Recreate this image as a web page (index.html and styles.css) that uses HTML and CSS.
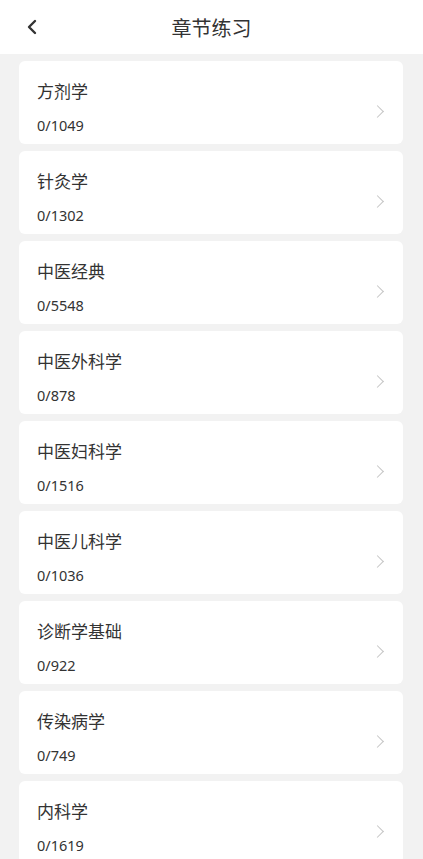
FILE: index.html
```html
<!DOCTYPE html>
<html lang="zh">
<head>
    <meta charset="UTF-8">
    <meta name="viewport" content="width=device-width, initial-scale=1.0">
    <title>章节练习</title>
    <link rel="stylesheet" href="styles.css">
</head>
<body>
    <div class="top-bar">
        <span class="back">
            <svg width="14" height="16" viewBox="0 0 14 16"><path d="M10 2 L4 8 L10 14" fill="none" stroke="#333" stroke-width="2.4" stroke-linecap="round" stroke-linejoin="round"/></svg>
        </span>
        <div class="title">章节练习</div>
    </div>
    <div class="chapter-list">
        <div class="chapter"><div class="info"><div class="name">方剂学</div><div class="count">0/1049</div></div><span class="arrow"></span></div>
        <div class="chapter"><div class="info"><div class="name">针灸学</div><div class="count">0/1302</div></div><span class="arrow"></span></div>
        <div class="chapter"><div class="info"><div class="name">中医经典</div><div class="count">0/5548</div></div><span class="arrow"></span></div>
        <div class="chapter"><div class="info"><div class="name">中医外科学</div><div class="count">0/878</div></div><span class="arrow"></span></div>
        <div class="chapter"><div class="info"><div class="name">中医妇科学</div><div class="count">0/1516</div></div><span class="arrow"></span></div>
        <div class="chapter"><div class="info"><div class="name">中医儿科学</div><div class="count">0/1036</div></div><span class="arrow"></span></div>
        <div class="chapter"><div class="info"><div class="name">诊断学基础</div><div class="count">0/922</div></div><span class="arrow"></span></div>
        <div class="chapter"><div class="info"><div class="name">传染病学</div><div class="count">0/749</div></div><span class="arrow"></span></div>
        <div class="chapter"><div class="info"><div class="name">内科学</div><div class="count">0/1619</div></div><span class="arrow"></span></div>
    </div>
</body>
</html>
```

FILE: styles.css
```css
body {
    margin: 0;
    background-color: #f2f2f2;
    color: #333;
    font-family: "Noto Sans CJK SC", "Noto Sans", sans-serif;
    overflow: hidden;
}
.top-bar {
    height: 54px;
    background-color: white;
    display: flex;
    align-items: center;
    justify-content: center;
    position: relative;
}
.back {
    position: absolute;
    left: 25px;
    top: 19px;
    line-height: 0;
}
.title {
    font-size: 20px;
    color: #333;
}
.chapter-list {
    padding: 7px 20px 0 19px;
    display: flex;
    flex-direction: column;
    gap: 7px;
}
.chapter {
    height: 83px;
    box-sizing: border-box;
    background-color: white;
    border-radius: 6px;
    display: flex;
    justify-content: space-between;
    padding: 19px 19px 0 18px;
    flex-shrink: 0;
}
.info {
    display: flex;
    flex-direction: column;
}
.name {
    font-size: 17px;
    line-height: 24px;
    margin-top: -1px;
}
.count {
    font-family: "Noto Sans", sans-serif;
    font-size: 14.5px;
    line-height: 20px;
    margin-top: 12px;
}
.arrow {
    width: 8px;
    height: 8px;
    border-top: 1.3px solid #c4c4c4;
    border-right: 1.3px solid #c4c4c4;
    transform: rotate(45deg);
    margin: 27px 2px 0 0;
}
```
